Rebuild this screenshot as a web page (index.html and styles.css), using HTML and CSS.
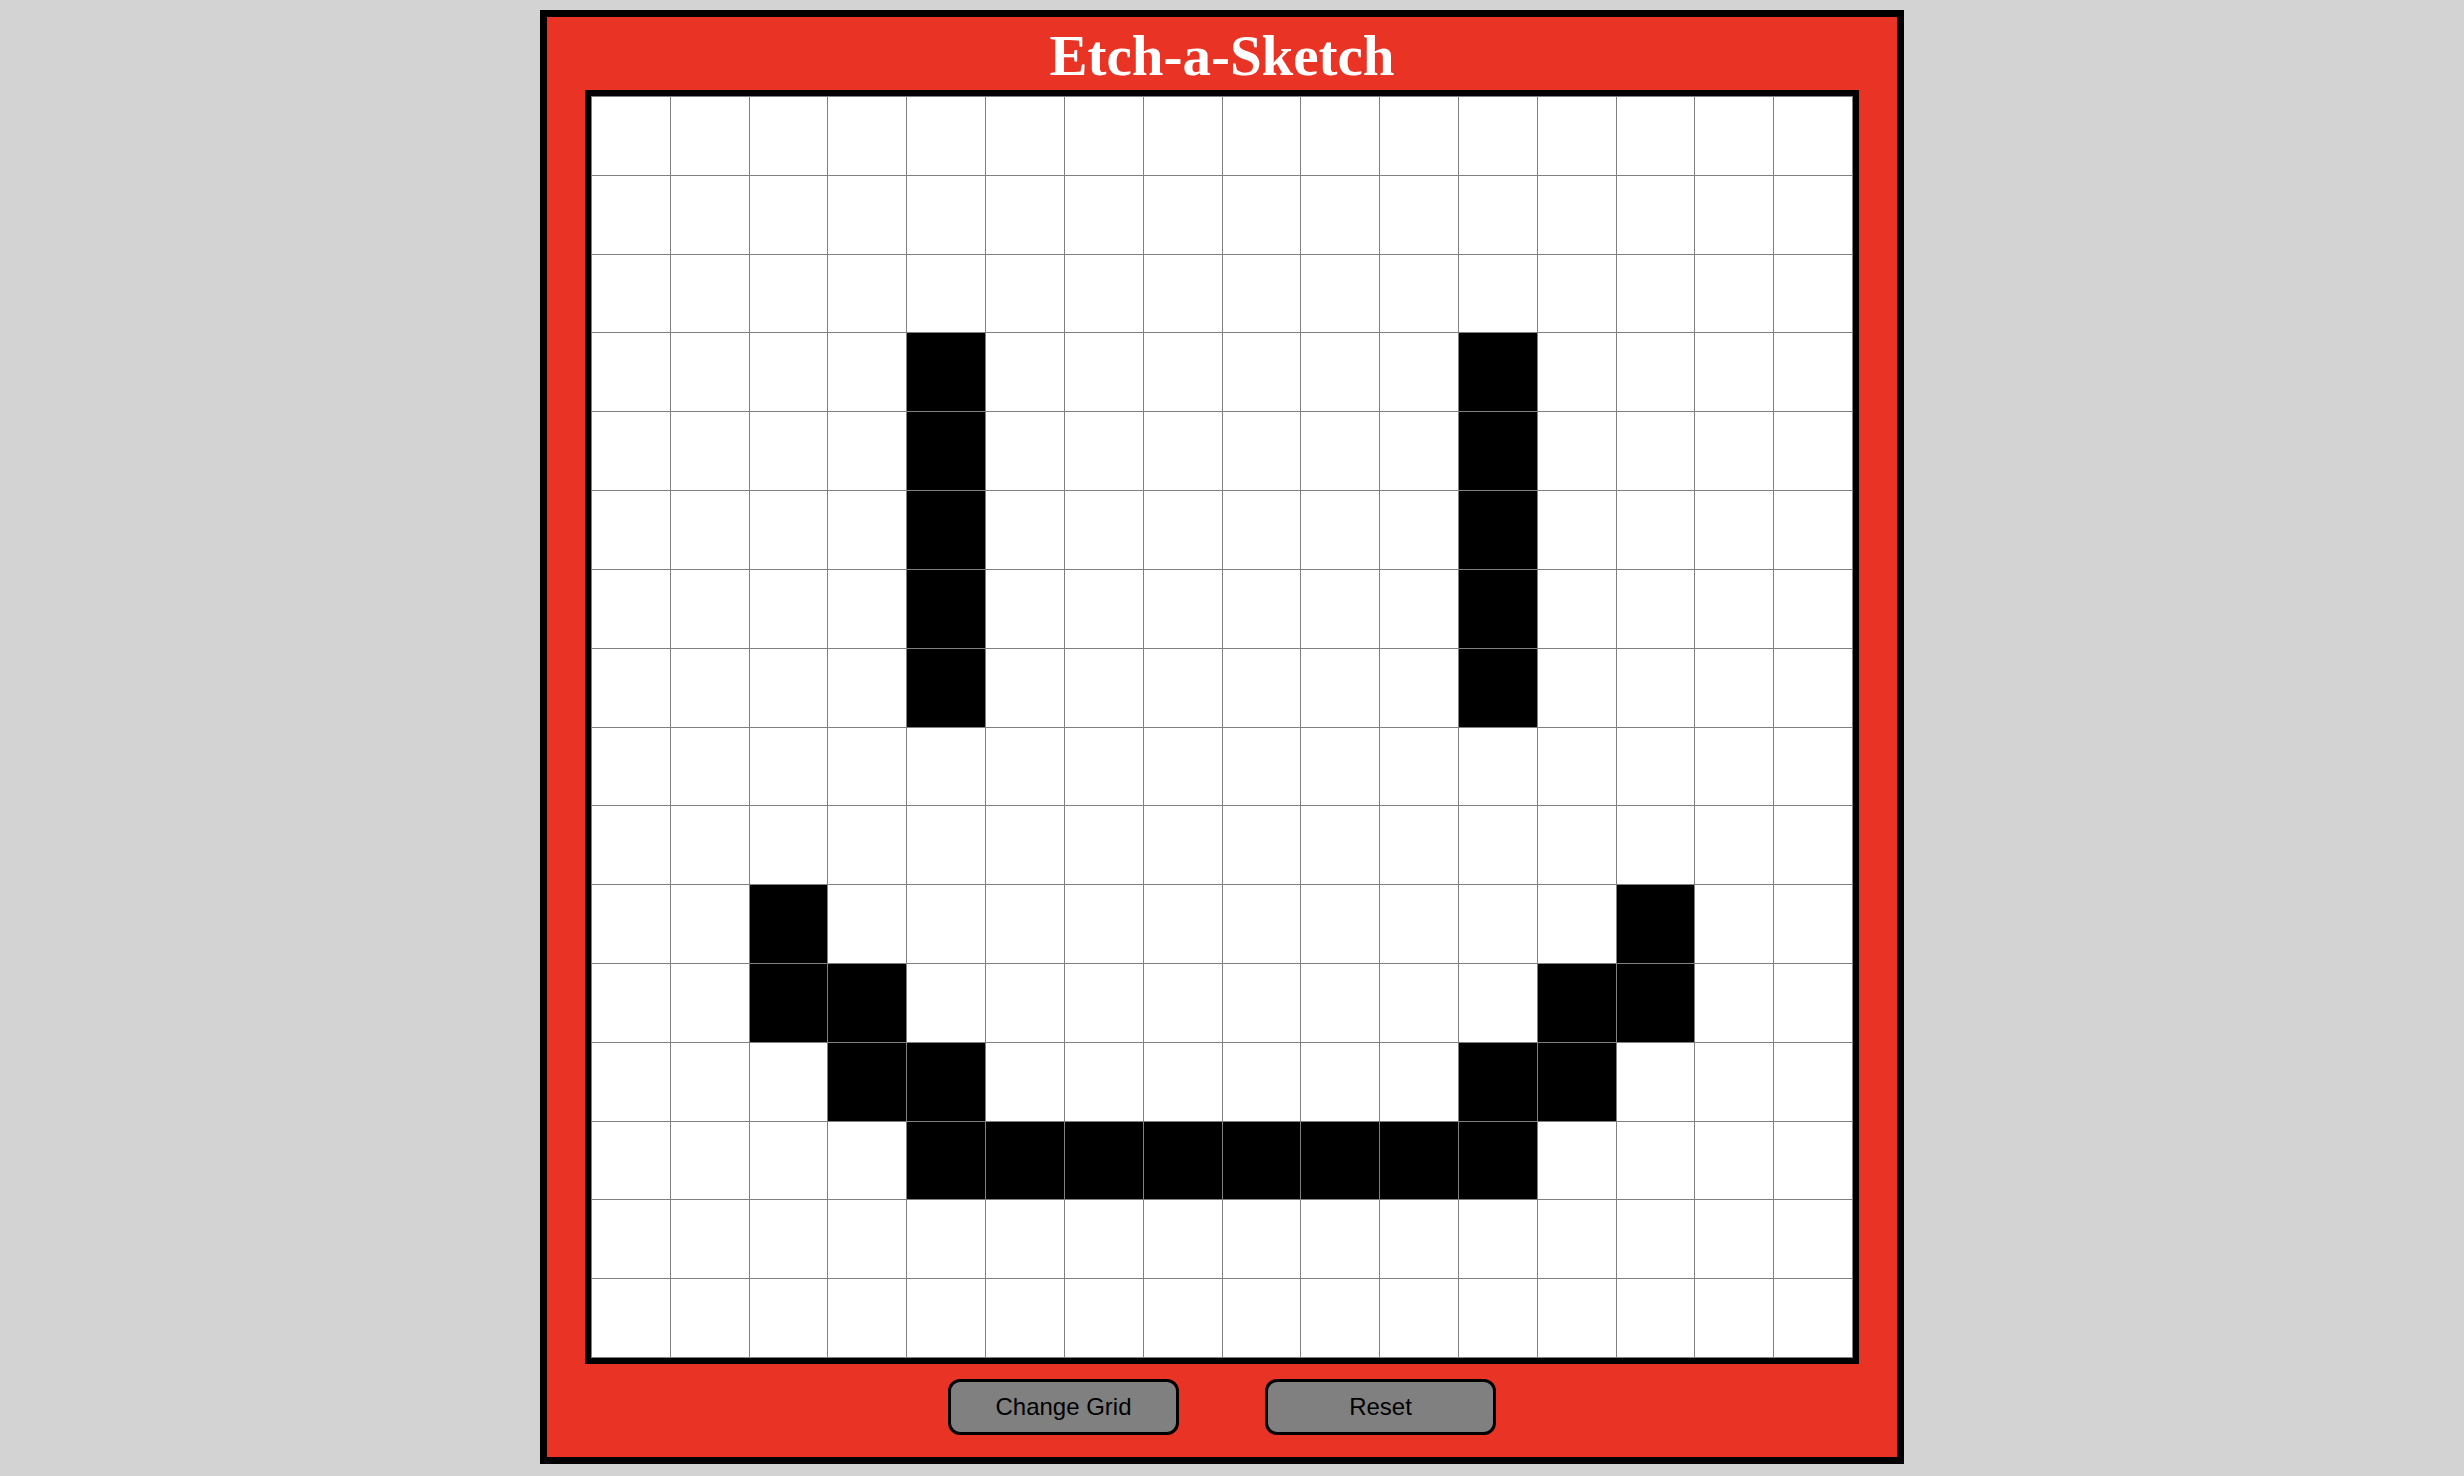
FILE: index.html
```html
<!DOCTYPE html>
<html lang="en">
<head>
<meta charset="utf-8">
<title>Etch-a-Sketch</title>
<link rel="stylesheet" href="styles.css">
</head>
<body>
<div class="page">
  <div class="frame">
    <h1 class="title">Etch-a-Sketch</h1>
    <div class="board">
      <div class="grid" id="grid"></div>
    </div>
    <div class="controls">
      <button class="btn">Change Grid</button>
      <button class="btn">Reset</button>
    </div>
  </div>
</div>
<script src="script.js"></script>
</body>
</html>
```

FILE: styles.css
```css
html, body {
  margin: 0;
  padding: 0;
}
body {
  background: #d3d3d3;
  width: 2464px;
  height: 1476px;
  overflow: hidden;
}
.page {
  display: flex;
  justify-content: center;
  padding: 10px 20px 0 0;
}
.frame {
  box-sizing: border-box;
  width: 1364px;
  border: 7px solid #000;
  background: #e93325;
  display: flex;
  flex-direction: column;
  align-items: center;
  padding: 7px 0 22px;
}
.title {
  margin: 0 0 2px;
  font-family: "Liberation Serif", "Times New Roman", serif;
  font-weight: bold;
  font-size: 57px;
  line-height: 64px;
  color: #fff;
}
.board {
  box-sizing: border-box;
  width: 1274px;
  height: 1274px;
  border: 6px solid #000;
}
.grid {
  box-sizing: border-box;
  width: 100%;
  height: 100%;
  display: grid;
  grid-template-columns: repeat(16, 1fr);
  grid-template-rows: repeat(16, 1fr);
  gap: 1px;
  padding: 1px;
  background: #808080;
}
.cell {
  background: #fff;
}
.cell.on {
  background: #000;
}
.controls {
  display: flex;
  gap: 86px;
  margin-top: 15px;
}
.btn {
  box-sizing: border-box;
  width: 231px;
  height: 56px;
  background: #808080;
  border: 3px solid #000;
  border-radius: 12px;
  font-family: "Liberation Sans", Arial, sans-serif;
  font-size: 24px;
  color: #000;
  padding: 0;
  cursor: pointer;
}
```

FILE: script.js
```js
(function () {
  var grid = document.getElementById('grid');
  var on = {};
  function mark(r, c) { on[r + ',' + c] = true; }
  for (var r = 3; r <= 7; r++) { mark(r, 4); mark(r, 11); }
  mark(10, 2); mark(10, 13);
  mark(11, 2); mark(11, 3); mark(11, 12); mark(11, 13);
  mark(12, 3); mark(12, 4); mark(12, 11); mark(12, 12);
  for (var c = 4; c <= 11; c++) { mark(13, c); }
  for (var i = 0; i < 16; i++) {
    for (var j = 0; j < 16; j++) {
      var d = document.createElement('div');
      d.className = on[i + ',' + j] ? 'cell on' : 'cell';
      grid.appendChild(d);
    }
  }
})();
```
